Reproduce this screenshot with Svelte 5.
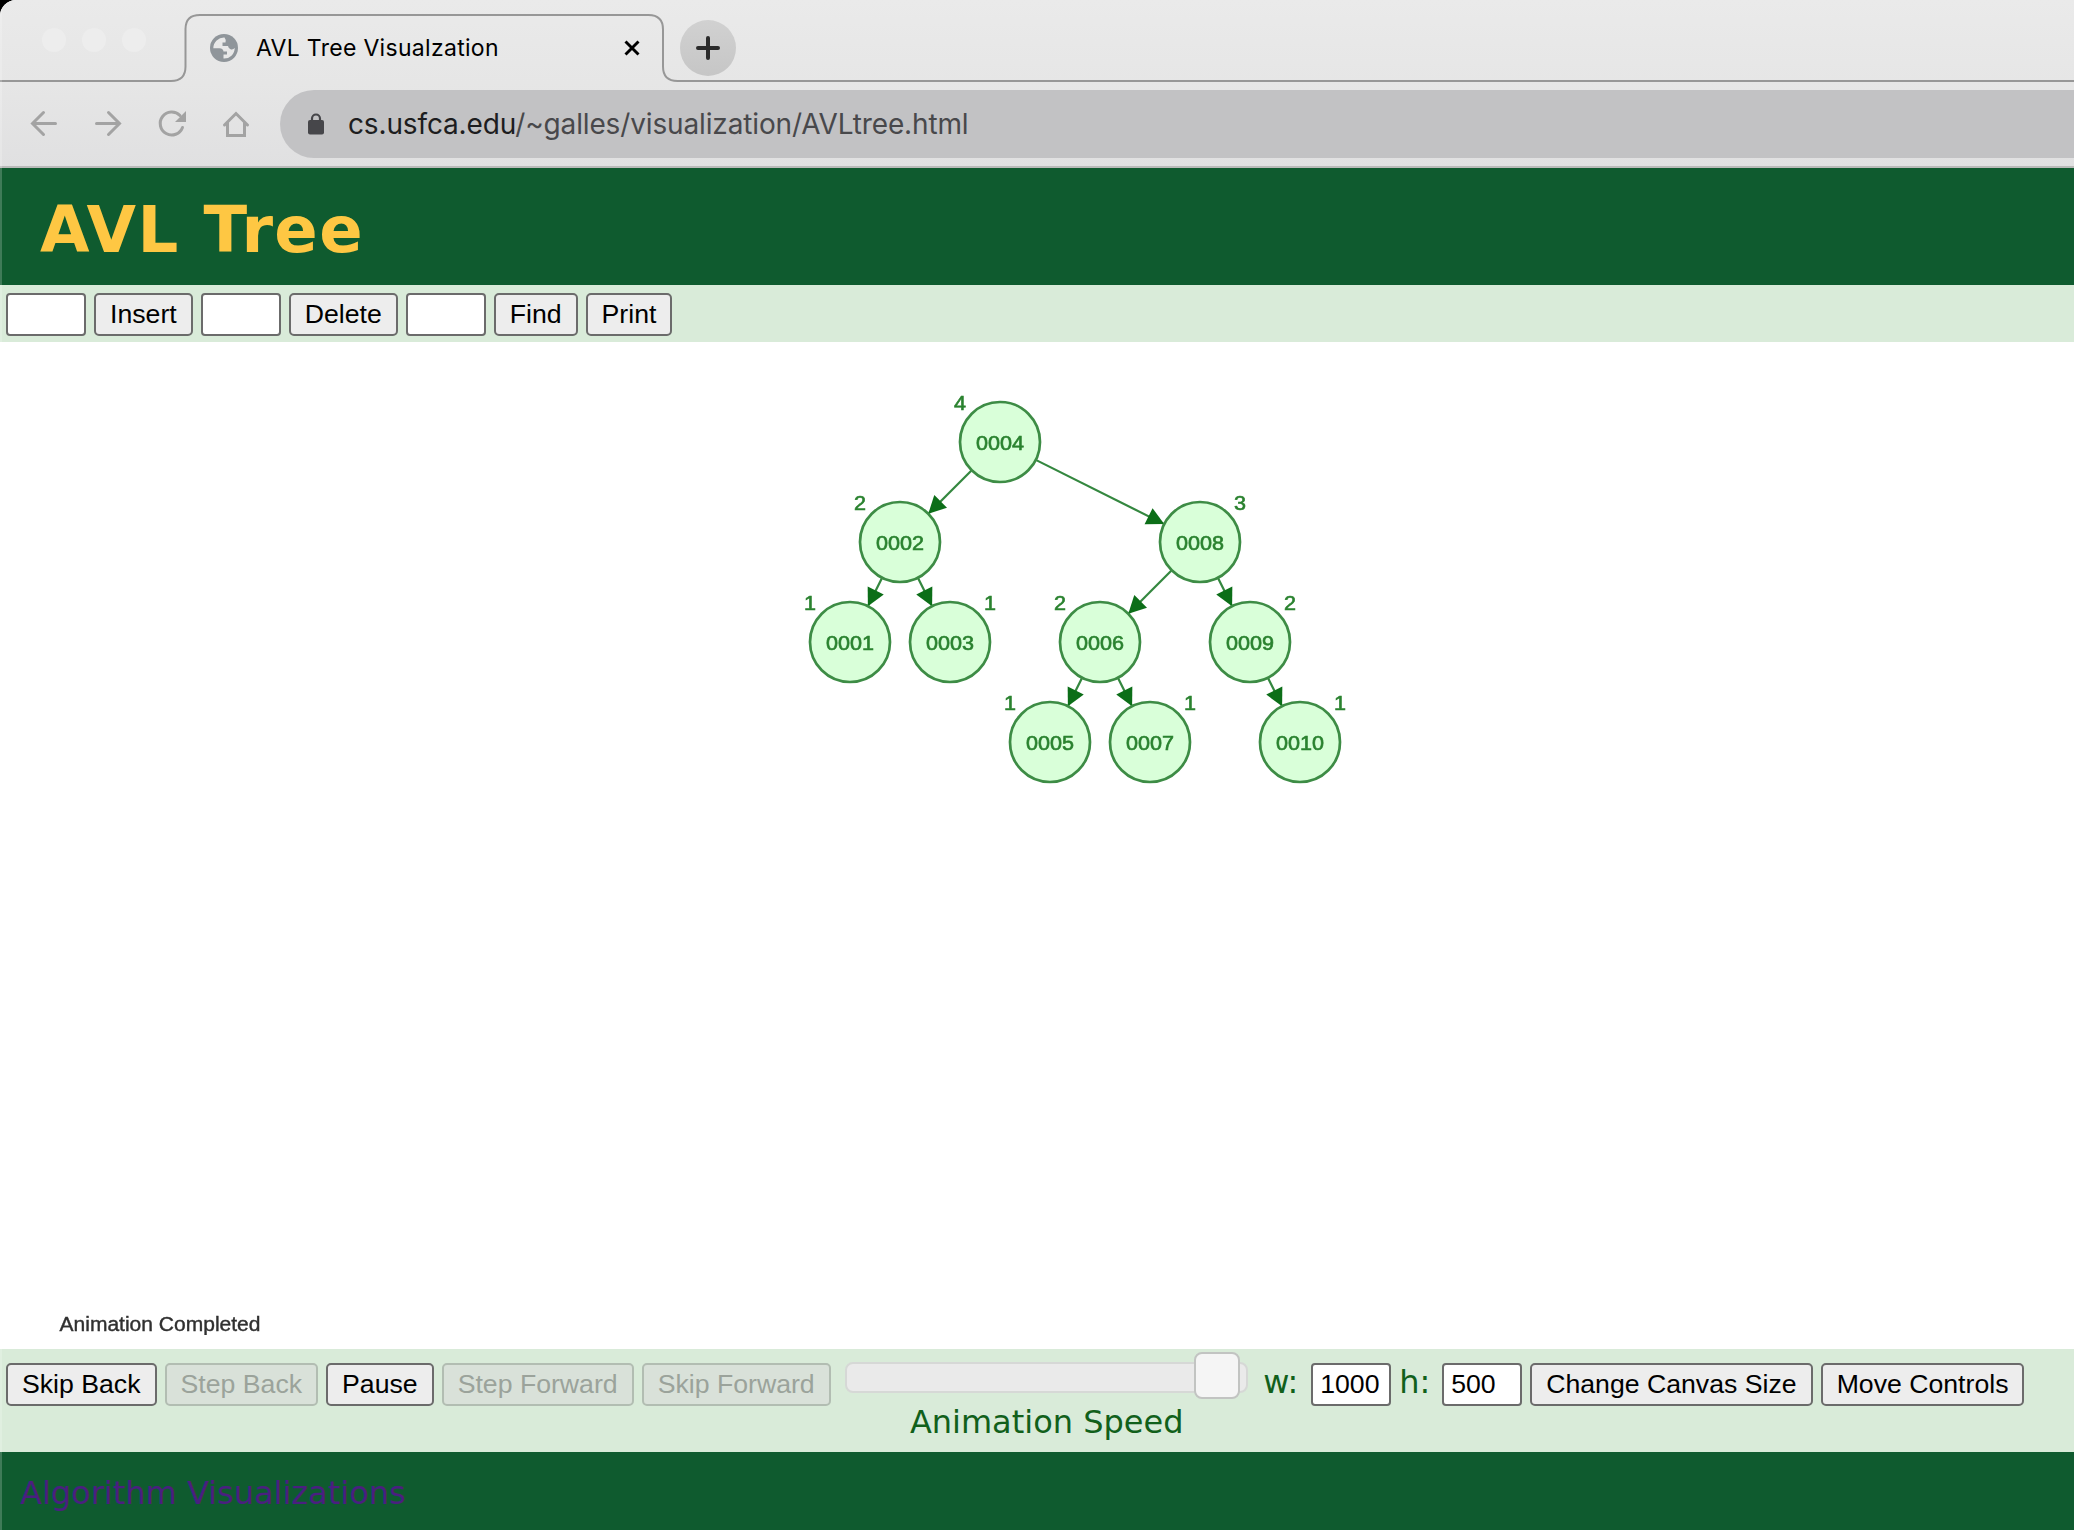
<script>
  // Tree nodes in canvas coordinates; `side` is where the height label sits.
  const nodes = [
    { id: '0004', x: 1000, y: 100, h: 4, side: -1 },
    { id: '0002', x: 900, y: 200, h: 2, side: -1 },
    { id: '0008', x: 1200, y: 200, h: 3, side: 1 },
    { id: '0001', x: 850, y: 300, h: 1, side: -1 },
    { id: '0003', x: 950, y: 300, h: 1, side: 1 },
    { id: '0006', x: 1100, y: 300, h: 2, side: -1 },
    { id: '0009', x: 1250, y: 300, h: 2, side: 1 },
    { id: '0005', x: 1050, y: 400, h: 1, side: -1 },
    { id: '0007', x: 1150, y: 400, h: 1, side: 1 },
    { id: '0010', x: 1300, y: 400, h: 1, side: 1 }
  ];
  const links = [[0, 1], [0, 2], [1, 3], [1, 4], [2, 5], [2, 6], [5, 7], [5, 8], [6, 9]];

  // Line plus arrow head that ends on the rim of the child node.
  const edges = links.map(([a, b]) => {
    const p = nodes[a], c = nodes[b];
    const d = Math.hypot(c.x - p.x, c.y - p.y);
    const ux = (c.x - p.x) / d, uy = (c.y - p.y) / d;
    const tx = c.x - ux * 40, ty = c.y - uy * 40;
    const bx = tx - ux * 17.5, by = ty - uy * 17.5;
    return {
      x1: p.x + ux * 40, y1: p.y + uy * 40, x2: tx, y2: ty,
      head: `${tx},${ty} ${bx - uy * 9},${by + ux * 9} ${bx + uy * 9},${by - ux * 9}`
    };
  });
</script>

<div class="window">
  <div class="chrome">
    <div class="strip">
      <svg class="outline" width="2074" height="84" viewBox="0 0 2074 84">
        <path d="M0 81H171Q185.500 81 185.500 66.500V29Q185.500 15 200 15H648.500Q663 15 663 29.500V66.500Q663 81 677.500 81H2074" fill="none" stroke="#979797" stroke-width="2" />
      </svg>
      <div class="lights"><i></i><i></i><i></i></div>
      <div class="tab">
        <svg width="28" height="28" viewBox="0 0 28 28">
          <circle cx="14" cy="14" r="14" fill="#8f959a" />
          <path d="M14.500 3.500A10.800 10.800 0 0 0 3.300 14.200H9.500Q13.300 14.500 13.500 17.500H17V20.500H13.500V24.600A10.600 10.600 0 0 0 24.700 13.800Q23.500 16 21 15.500Q18.500 15 18 12H12.500V8.500H15.500Q16.500 6 14.500 3.500Z" fill="#e8e8e8" />
        </svg>
        <span class="title">AVL Tree Visualzation</span>
        <svg class="close" width="16" height="16" viewBox="0 0 16 16"><path d="M1.500 1.500L14.500 14.500M14.500 1.500L1.500 14.500" stroke="#000" stroke-width="2.900" /></svg>
      </div>
      <div class="plus">
        <svg width="24" height="24" viewBox="0 0 24 24"><path d="M12 2V22M2 12H22" stroke="#2b2b2b" stroke-width="4" stroke-linecap="round" /></svg>
      </div>
    </div>
    <div class="nav">
      <svg class="tools" width="230" height="32" viewBox="26 108 230 32" fill="none" stroke="#a3a3a3" stroke-width="3" stroke-linecap="round">
        <path d="M55.500 123.500H33M43.500 112.500L32.500 123.500L43.500 134.500" />
        <path d="M96.500 123.500H119M108.500 112.500L119.500 123.500L108.500 134.500" />
        <path d="M182.500 127.500A11.500 11.500 0 1 1 180 115.500" />
        <path d="M186 111V122H175Z" fill="#a3a3a3" stroke="none" />
        <path d="M224.500 125L236 113.500L247.500 125M227.500 123V135.500H244.500V123" />
      </svg>
      <div class="address">
        <svg width="16" height="22" viewBox="0 0 16 22"><rect y="7" width="16" height="14.500" rx="2" fill="#46464a" /><path d="M4 8V5.500A4 4 0 0 1 12 5.500V8" fill="none" stroke="#46464a" stroke-width="2.200" /></svg>
        <span class="url"><b>cs.usfca.edu</b>/~galles/visualization/AVLtree.html</span>
      </div>
    </div>
  </div>

  <header><h1>AVL Tree</h1></header>

  <div class="bar algo">
    <input aria-label="Insert value" /><button>Insert</button>
    <input aria-label="Delete value" /><button>Delete</button>
    <input aria-label="Find value" /><button>Find</button>
    <button>Print</button>
  </div>

  <svg class="canvas" width="2074" height="1007" viewBox="0 0 2074 1007">
    {#each edges as e}
      <line x1={e.x1} y1={e.y1} x2={e.x2} y2={e.y2} />
      <polygon points={e.head} />
    {/each}
    {#each nodes as n}
      <circle cx={n.x} cy={n.y} r="40" />
      <text x={n.x - 24} y={n.y + 8} textLength="48" lengthAdjust="spacingAndGlyphs">{n.id}</text>
      <text x={n.x + n.side * 40 - 6} y={n.y - 32} textLength="12" lengthAdjust="spacingAndGlyphs">{n.h}</text>
    {/each}
    <text class="status" x="59.500" y="988.500" textLength="201" lengthAdjust="spacingAndGlyphs">Animation Completed</text>
  </svg>

  <div class="bar general">
    <button>Skip Back</button>
    <button disabled>Step Back</button>
    <button>Pause</button>
    <button disabled>Step Forward</button>
    <button disabled>Skip Forward</button>
    <div class="speed">
      <div class="track"><div class="handle"></div></div>
      <span class="caption">Animation Speed</span>
    </div>
    <span class="dim w">w:</span><input aria-label="Canvas width" value="1000" />
    <span class="dim h">h:</span><input aria-label="Canvas height" value="500" />
    <button>Change Canvas Size</button>
    <button>Move Controls</button>
  </div>

  <footer><span>Algorithm Visualizations</span></footer>
</div>

<style>
  :global(body) { margin: 0; background: #000; overflow: hidden; }
  .window {
    position: relative;
    width: 2074px;
    height: 1530px;
    overflow: hidden;
    border-top-left-radius: 16px;
    background: #fff;
    display: flex;
    flex-direction: column;
  }
  /* light hairline along the window's left edge */
  .window::after {
    content: '';
    position: absolute;
    inset: 0 auto 0 0;
    width: 2px;
    background: rgba(255, 255, 255, 0.2);
  }
  .chrome {
    box-sizing: border-box;
    height: 168px;
    background: linear-gradient(#eaeaea, #e6e6e6 50%, #e0e0e1);
    border-bottom: 2px solid #b9bab9;
  }
  .strip {
    position: relative;
    height: 84px;
    display: flex;
    align-items: flex-start;
  }
  .outline { position: absolute; left: 0; top: 0; }
  .lights { display: flex; gap: 16px; padding: 28px 0 0 42px; width: 144px; }
  .lights i { width: 24px; height: 24px; border-radius: 50%; background: #ededed; }
  .tab {
    display: flex;
    align-items: center;
    width: 430px;
    height: 66px;
    margin-top: 15px;
    padding-left: 24px;
  }
  .title {
    margin-left: 18px;
    font: 23px Inter, sans-serif;
    letter-spacing: 0.300px;
    color: #000;
    white-space: nowrap;
  }
  .close { margin-left: auto; }
  .plus {
    display: flex;
    align-items: center;
    justify-content: center;
    width: 56px;
    height: 56px;
    margin: 20px 0 0 40px;
    border-radius: 50%;
    background: linear-gradient(#d1d1d1, #c6c6c6);
  }
  .nav { display: flex; align-items: center; height: 80px; padding-left: 26px; }
  .tools { margin-right: 24px; flex: none; }
  .address {
    display: flex;
    align-items: center;
    flex: 1;
    height: 68px;
    padding-left: 28px;
    border-radius: 34px 0 0 34px;
    background: #c2c2c4;
  }
  .url { margin-left: 24px; font: 28px Inter, sans-serif; letter-spacing: -0.140px; color: #48484b; white-space: nowrap; }
  .url b { font-weight: 400; color: #1d1d20; }
  header {
    box-sizing: border-box;
    height: 117px;
    padding: 25px 0 0 40px;
    background: #0f5b2f;
  }
  h1 {
    margin: 0;
    font: bold 64px/75px 'DejaVu Sans', sans-serif;
    letter-spacing: 1.400px;
    color: #fec743;
    white-space: nowrap;
  }
  .bar {
    box-sizing: border-box;
    display: flex;
    align-items: flex-start;
    gap: 8px;
    padding-left: 6px;
    background: #d9ebd9;
    font-family: 'DejaVu Sans', sans-serif;
    color: #11601b;
  }
  .algo { height: 57px; padding-top: 8px; }
  .general { height: 103px; padding-top: 14px; }
  button, input {
    box-sizing: border-box;
    height: 43px;
    margin: 0;
    border: 2px solid #6b6b6b;
    border-radius: 5px;
    font: 26.670px/38px 'Liberation Sans', Arial, sans-serif;
    color: #000;
    white-space: nowrap;
    flex: none;
  }
  button { padding: 0 14px 1px; background: #ededed; }
  input { width: 80px; padding: 0 0 1px 7px; background: #fff; border-radius: 4px; }
  button:disabled { background: #d9e1d9; border-color: #b2bdb2; color: #9ba39b; }
  .canvas { display: block; filter: blur(0.600px); }
  .canvas line { stroke: #00690f; stroke-opacity: 0.800; stroke-width: 2.200; }
  .canvas polygon { fill: #0c6e18; }
  .canvas circle { fill: #d9ffd9; stroke: #3d8c45; stroke-width: 2.700; }
  .canvas text { font: 20px 'Liberation Sans', Arial, sans-serif; fill: #2a822f; stroke: #2a822f; stroke-width: 0.600; }
  .canvas .status { fill: #303030; stroke: #303030; stroke-width: 0.400; }
  .speed { width: 403px; margin: -1.500px 7px 0 6.500px; display: flex; flex-direction: column; align-items: center; }
  .track {
    position: relative;
    box-sizing: border-box;
    width: 403px;
    height: 31px;
    border: 2px solid #d6d8d6;
    border-radius: 8px;
    background: #eaeaea;
  }
  .handle {
    position: absolute;
    box-sizing: border-box;
    left: 347px;
    top: -11.500px;
    width: 46px;
    height: 47px;
    border: 2px solid #c2c4c2;
    border-radius: 8px;
    background: #f5f5f5;
  }
  .caption { font-size: 32px; line-height: 38px; margin-top: 10px; white-space: nowrap; }
  .dim { font-size: 32px; line-height: 38px; white-space: nowrap; flex: none; }
  .dim.w { width: 40px; }
  .dim.h { width: 35px; }
  footer {
    flex: 1;
    padding: 21.500px 0 0 20px;
    background: #0f5b2f;
    color: #4a1f80;
    font: 32px/38px 'DejaVu Sans', sans-serif;
  }
</style>
